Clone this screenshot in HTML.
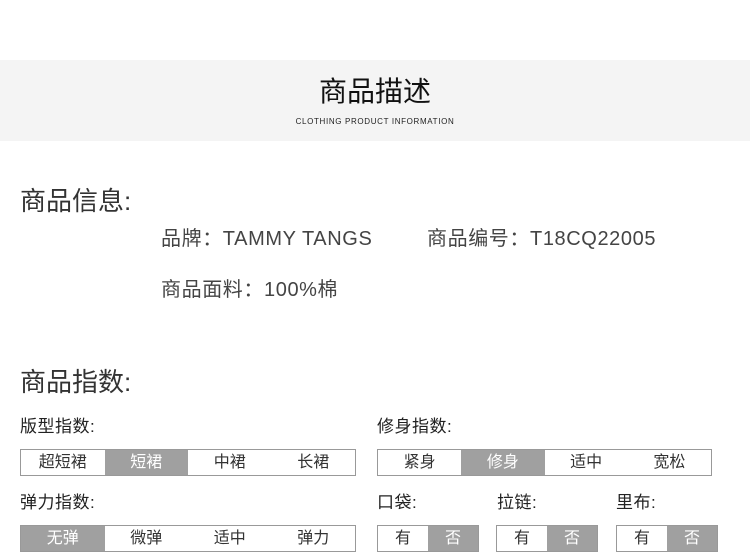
<!DOCTYPE html>
<html><head><meta charset="utf-8"><style>
*{margin:0;padding:0;box-sizing:border-box}
body{width:750px;height:552px;background:#fff;position:relative;overflow:hidden;font-family:"Liberation Sans","Noto Sans CJK SC",sans-serif;color:#333}
.a{position:absolute;white-space:nowrap}
.band{position:absolute;left:0;top:60px;width:750px;height:81px;background:#f4f4f4}
.box{position:absolute;height:27px;border:1px solid #999;display:flex}
.box div{flex:1;text-align:center;font-size:16px;line-height:25px;color:#333}
.box .g{background:#a0a0a0;color:#fff}
.lb{position:absolute;font-size:17px;color:#222;white-space:nowrap;line-height:20px;letter-spacing:0.5px}
.inf{position:absolute;white-space:nowrap;font-size:20px;line-height:24px;color:#444;letter-spacing:0.6px}
</style></head><body>
<div class="band"></div>
<div class="a" style="left:0;width:750px;text-align:center;top:74px;font-size:28px;color:#111;line-height:36px">商品描述</div>
<div class="a" style="left:0;width:750px;text-align:center;top:117px;font-size:8px;color:#222;letter-spacing:0.65px">CLOTHING PRODUCT INFORMATION</div>
<div class="a" style="left:20px;top:186px;font-size:26px;line-height:30px;color:#333">商品信息:</div>
<div class="inf" style="left:161px;top:227px">品牌：TAMMY TANGS</div>
<div class="inf" style="left:427px;top:227px">商品编号：T18CQ22005</div>
<div class="inf" style="left:161px;top:278px">商品面料：100%棉</div>
<div class="a" style="left:20px;top:367px;font-size:26px;line-height:30px;color:#333">商品指数:</div>
<div class="lb" style="left:20px;top:417px">版型指数:</div>
<div class="lb" style="left:377px;top:417px">修身指数:</div>
<div class="box" style="left:20px;top:449px;width:336px"><div>超短裙</div><div class="g">短裙</div><div>中裙</div><div>长裙</div></div>
<div class="box" style="left:377px;top:449px;width:335px"><div>紧身</div><div class="g">修身</div><div>适中</div><div>宽松</div></div>
<div class="lb" style="left:20px;top:493px">弹力指数:</div>
<div class="lb" style="left:377px;top:493px">口袋:</div>
<div class="lb" style="left:497px;top:493px">拉链:</div>
<div class="lb" style="left:616px;top:493px">里布:</div>
<div class="box" style="left:20px;top:525px;width:336px"><div class="g">无弹</div><div>微弹</div><div>适中</div><div>弹力</div></div>
<div class="box" style="left:377px;top:525px;width:102px"><div>有</div><div class="g">否</div></div>
<div class="box" style="left:496px;top:525px;width:102px"><div>有</div><div class="g">否</div></div>
<div class="box" style="left:616px;top:525px;width:102px"><div>有</div><div class="g">否</div></div>
</body></html>
